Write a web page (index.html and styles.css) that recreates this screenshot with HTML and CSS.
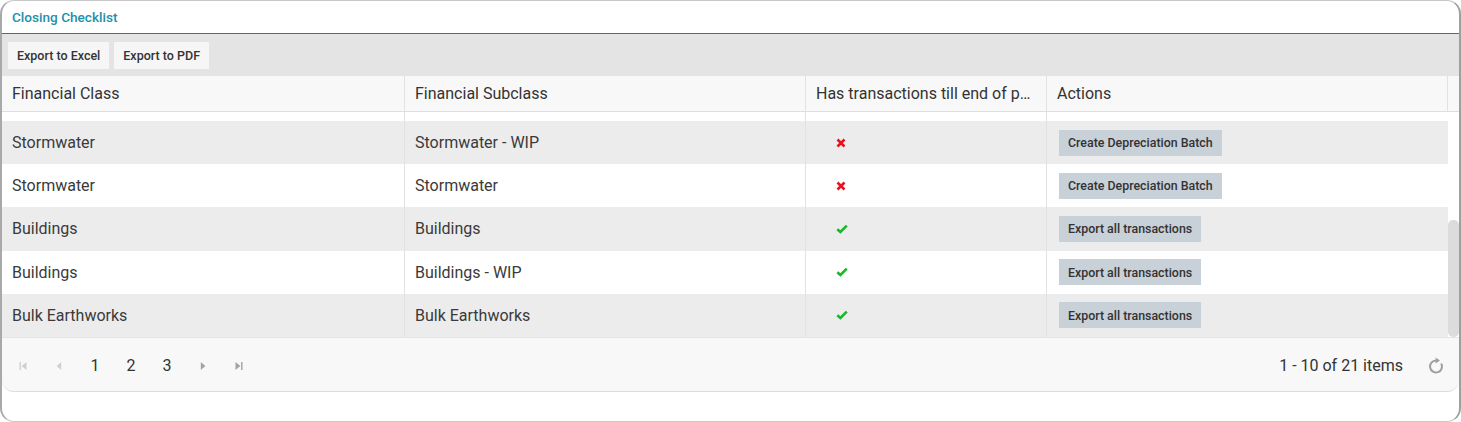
FILE: index.html
```html
<!DOCTYPE html>
<html lang="en">
<head>
  <meta charset="UTF-8">
  <meta name="viewport" content="width=device-width, initial-scale=1.0">
  <title>Closing Checklist</title>
  <link rel="stylesheet" href="styles.css">
</head>
<body>
  <div class="window">
    <div class="window-title">Closing Checklist</div>
    <div class="toolbar">
      <button class="tool-btn">Export to Excel</button>
      <button class="tool-btn">Export to PDF</button>
    </div>

    <div class="grid">
      <div class="grid-header">
        <div class="row head-row">
          <div class="cell">Financial Class</div>
          <div class="cell">Financial Subclass</div>
          <div class="cell">Has transactions till end of period</div>
          <div class="cell">Actions</div>
        </div>
      </div>

      <div class="grid-body">
        <div class="grid-content" id="gridContent">
          <div class="row">
            <div class="cell">Roads</div>
            <div class="cell">Roads - WIP</div>
            <div class="cell flag"><svg class="icon-no" viewBox="0 0 10 10"><path d="M1.5 1.5L8.5 8.5M8.5 1.5L1.5 8.5"/></svg></div>
            <div class="cell"><button class="act-btn">Create Depreciation Batch</button></div>
          </div>
          <div class="row alt">
            <div class="cell">Roads</div>
            <div class="cell">Roads</div>
            <div class="cell flag"><svg class="icon-no" viewBox="0 0 10 10"><path d="M1.5 1.5L8.5 8.5M8.5 1.5L1.5 8.5"/></svg></div>
            <div class="cell"><button class="act-btn">Create Depreciation Batch</button></div>
          </div>
          <div class="row">
            <div class="cell">Plant and Equipment</div>
            <div class="cell">Plant and Equipment</div>
            <div class="cell flag"><svg class="icon-no" viewBox="0 0 10 10"><path d="M1.5 1.5L8.5 8.5M8.5 1.5L1.5 8.5"/></svg></div>
            <div class="cell"><button class="act-btn">Create Depreciation Batch</button></div>
          </div>
          <div class="row alt">
            <div class="cell">Land</div>
            <div class="cell">Land</div>
            <div class="cell flag"><svg class="icon-no" viewBox="0 0 10 10"><path d="M1.5 1.5L8.5 8.5M8.5 1.5L1.5 8.5"/></svg></div>
            <div class="cell"><button class="act-btn">Create Depreciation Batch</button></div>
          </div>
          <div class="row">
            <div class="cell">Sewerage</div>
            <div class="cell">Sewerage - WIP</div>
            <div class="cell flag"><svg class="icon-no" viewBox="0 0 10 10"><path d="M1.5 1.5L8.5 8.5M8.5 1.5L1.5 8.5"/></svg></div>
            <div class="cell"><button class="act-btn">Create Depreciation Batch</button></div>
          </div>
          <div class="row alt">
            <div class="cell">Stormwater</div>
            <div class="cell">Stormwater - WIP</div>
            <div class="cell flag"><svg class="icon-no" viewBox="0 0 10 10"><path d="M1.5 1.5L8.5 8.5M8.5 1.5L1.5 8.5"/></svg></div>
            <div class="cell"><button class="act-btn">Create Depreciation Batch</button></div>
          </div>
          <div class="row">
            <div class="cell">Stormwater</div>
            <div class="cell">Stormwater</div>
            <div class="cell flag"><svg class="icon-no" viewBox="0 0 10 10"><path d="M1.5 1.5L8.5 8.5M8.5 1.5L1.5 8.5"/></svg></div>
            <div class="cell"><button class="act-btn">Create Depreciation Batch</button></div>
          </div>
          <div class="row alt">
            <div class="cell">Buildings</div>
            <div class="cell">Buildings</div>
            <div class="cell flag"><svg class="icon-yes" viewBox="0 0 12 10"><path d="M1.3 5.2L4.4 8L10.8 1.6"/></svg></div>
            <div class="cell"><button class="act-btn">Export all transactions</button></div>
          </div>
          <div class="row">
            <div class="cell">Buildings</div>
            <div class="cell">Buildings - WIP</div>
            <div class="cell flag"><svg class="icon-yes" viewBox="0 0 12 10"><path d="M1.3 5.2L4.4 8L10.8 1.6"/></svg></div>
            <div class="cell"><button class="act-btn">Export all transactions</button></div>
          </div>
          <div class="row alt">
            <div class="cell">Bulk Earthworks</div>
            <div class="cell">Bulk Earthworks</div>
            <div class="cell flag"><svg class="icon-yes" viewBox="0 0 12 10"><path d="M1.3 5.2L4.4 8L10.8 1.6"/></svg></div>
            <div class="cell"><button class="act-btn">Export all transactions</button></div>
          </div>
        </div>
        <div class="scrollbar"><div class="thumb"></div></div>
      </div>

      <div class="pager">
        <div class="pager-nav">
          <span class="pg-btn disabled"><svg viewBox="0 0 10 10"><path d="M1.5 1h1.4v8h-1.4z M8.5 1v8L3.6 5z"/></svg></span>
          <span class="pg-btn disabled"><svg viewBox="0 0 10 10"><path d="M7.2 1v8L2.6 5z"/></svg></span>
          <span class="pg-num">1</span>
          <span class="pg-num">2</span>
          <span class="pg-num">3</span>
          <span class="pg-btn"><svg viewBox="0 0 10 10"><path d="M2.8 1v8L7.4 5z"/></svg></span>
          <span class="pg-btn"><svg viewBox="0 0 10 10"><path d="M1.5 1v8L6.4 5z M7.1 1h1.4v8H7.1z"/></svg></span>
        </div>
        <div class="pager-info">
          <span>1 - 10 of 21 items</span>
          <span class="refresh"><svg viewBox="0 0 18 18"><path d="M14.2 6.5A6 6 0 1 1 9 3.5" fill="none"/><path class="head" d="M8.6 0.6L13 3.6L8.6 6.6z"/></svg></span>
        </div>
      </div>
    </div>
  </div>

  <script>
    var content = document.getElementById("gridContent");
    content.scrollTop = content.scrollHeight;
  </script>
</body>
</html>
```

FILE: styles.css
```css
* {
  box-sizing: border-box;
}
body {
  margin: 0;
  background-color: #fff;
  font-family: Roboto, "Liberation Sans", sans-serif;
  color: #333;
}
.window {
  width: 1461px;
  height: 422px;
  border: 1px solid #c9c9c9;
  border-left: 2px solid #a9a9a9;
  border-right: 2px solid #9f9f9f;
  border-radius: 14px;
  background-color: #fff;
  overflow: hidden;
}
.window-title {
  height: 33px;
  padding-left: 10px;
  line-height: 32px;
  font-size: 13.6px;
  font-weight: 500;
  color: #2290ab;
  border-bottom: 1px solid #237f90;
}
.toolbar {
  display: flex;
  gap: 5px;
  height: 42px;
  padding: 8px 6px 0;
  background-color: #e4e4e4;
}
.tool-btn {
  height: 27px;
  padding: 0 9px;
  border: none;
  background-color: #f6f6f6;
  font-family: inherit;
  font-size: 12.5px;
  font-weight: 500;
  color: #333;
}
.row {
  display: grid;
  grid-template-columns: 403px 401px 241px 1fr;
  height: 43.2px;
  background-color: #fff;
}
.row.alt {
  background-color: #ececec;
}
.cell {
  display: flex;
  align-items: center;
  padding: 0 10px;
  border-right: 1px solid #e2e2e2;
  font-size: 16px;
  color: #3a3a3a;
  white-space: nowrap;
  overflow: hidden;
}
.cell:last-child {
  border-right: none;
}
.grid-header {
  padding-right: 11px;
  background-color: #f8f8f8;
  border-bottom: 1px solid #dedede;
}
.head-row {
  height: 35px;
  background-color: #f8f8f8;
}
.head-row .cell {
  display: block;
  line-height: 35px;
  text-overflow: ellipsis;
  color: #333;
}
.head-row .cell:last-child {
  border-right: 1px solid #e2e2e2;
}
.grid-body {
  display: flex;
  height: 225px;
}
.grid-content {
  flex: 1;
  overflow: hidden;
}
.scrollbar {
  display: flex;
  flex-direction: column;
  justify-content: flex-end;
  width: 11px;
  background-color: #fff;
}
.thumb {
  height: 117px;
  background-color: #dcdcdc;
  border-radius: 5px;
}
.flag {
  padding-left: 30px;
}
.icon-no {
  width: 10px;
  height: 10px;
  fill: none;
  stroke: #e8121c;
  stroke-width: 2.6;
}
.icon-yes {
  width: 12px;
  height: 10px;
  fill: none;
  stroke: #17b82a;
  stroke-width: 2.6;
}
.act-btn {
  height: 26px;
  margin-left: 2px;
  padding: 0 9px;
  border: none;
  background-color: #c8d0d8;
  font-family: inherit;
  font-size: 12.4px;
  font-weight: 500;
  color: #333;
}
.pager {
  display: flex;
  align-items: center;
  justify-content: space-between;
  height: 55px;
  padding: 2px 14px 0 3px;
  background-color: #f8f8f8;
  border-top: 1px solid #e4e4e4;
  border-bottom: 1px solid #dcdcdc;
  border-radius: 0 0 12px 12px;
}
.pager-nav {
  display: flex;
  align-items: center;
}
.pg-btn, .pg-num {
  display: flex;
  align-items: center;
  justify-content: center;
  width: 36px;
  height: 30px;
  font-size: 16px;
  color: #333;
}
.pg-btn svg {
  width: 10px;
  height: 10px;
  fill: #a3a3a3;
}
.pg-btn.disabled svg {
  fill: #d0d0d0;
}
.pager-info {
  display: flex;
  align-items: center;
  gap: 24px;
  font-size: 16px;
  color: #333;
}
.refresh svg {
  display: block;
  width: 18px;
  height: 18px;
  stroke: #a0a0a0;
  stroke-width: 2;
}
.refresh .head {
  fill: #a0a0a0;
  stroke: none;
}
```
